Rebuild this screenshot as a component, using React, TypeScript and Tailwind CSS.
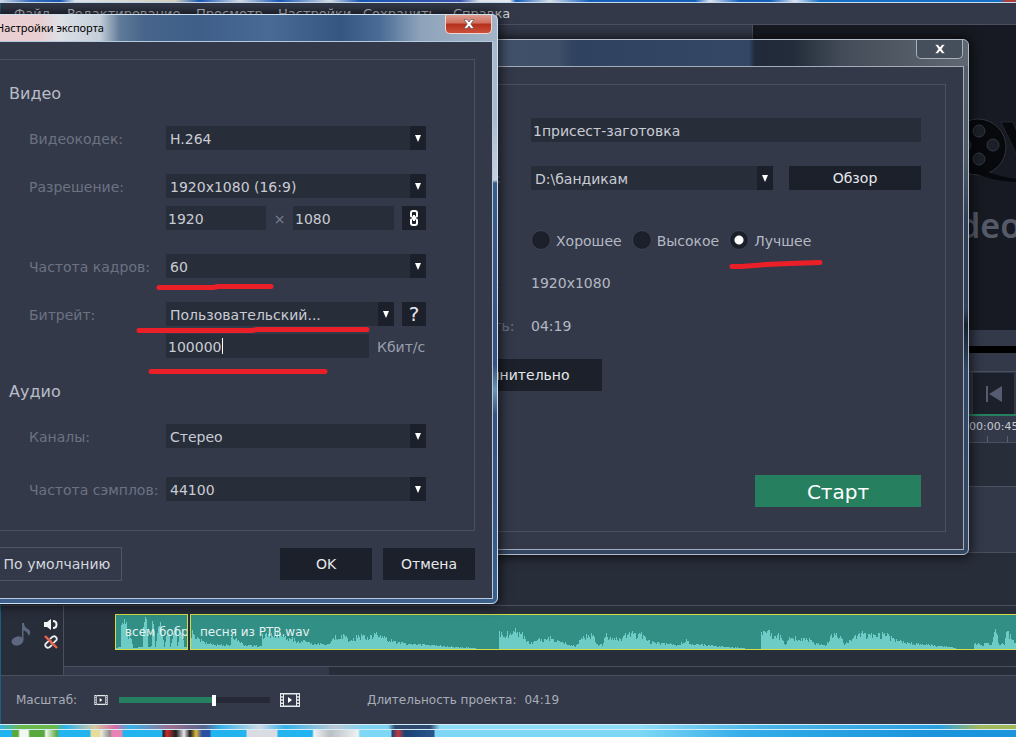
import type { ReactNode } from "react";
import clsx from "clsx";

type Point = [x: number, height: number];

const MENU_ITEMS = [
  { label: "Файл", className: "w-[53px]" },
  { label: "Редактирование", className: "w-[129px]" },
  { label: "Просмотр", className: "w-[82px]" },
  { label: "Настройки", className: "w-[85px]" },
  { label: "Сохранить", className: "w-[90px]" },
  { label: "Справка", className: "w-[60px]" },
];

const INTRO_WAVE: Point[] = [
  [0, 1], [4, 2], [5, 26], [7, 24], [8, 30], [10, 26], [11, 14], [12, 10], [13, 16], [15, 9],
  [17, 1], [26, 2], [27, 22], [29, 34], [30, 28], [31, 16], [32, 2], [35, 3], [36, 28], [38, 20],
  [39, 2], [42, 24], [44, 28], [46, 14], [48, 2], [50, 12], [53, 18], [54, 2], [57, 16], [60, 20],
  [61, 3], [64, 18], [67, 10], [68, 2], [72, 1],
];

const SONG_WAVE: Point[] = [
  [0, 17], [4, 12], [10, 9], [16, 5], [39, 4], [40, 16], [46, 8], [54, 4], [70, 3], [71, 15],
  [84, 17], [98, 11], [118, 6], [138, 5], [142, 12], [154, 15], [158, 7], [167, 14], [181, 12],
  [187, 16], [198, 9], [218, 5], [238, 4], [262, 2], [284, 1], [285, 0], [307, 0], [308, 18],
  [318, 15], [325, 21], [333, 12], [341, 6], [354, 12], [369, 8], [384, 3], [393, 14], [402, 14],
  [406, 5], [411, 4], [415, 14], [424, 10], [436, 16], [450, 15], [459, 7], [488, 4], [494, 9],
  [500, 5], [524, 3], [540, 2], [553, 1], [554, 0], [569, 0], [570, 16], [587, 15], [594, 5],
  [598, 12], [614, 11], [624, 6], [634, 4], [640, 13], [650, 14], [653, 4], [659, 11], [669, 16],
  [680, 14], [695, 15], [704, 9], [719, 6], [739, 4], [759, 2], [770, 0], [782, 0], [783, 6],
  [792, 4], [795, 9], [800, 4], [804, 18], [808, 6], [813, 4], [815, 22], [820, 10], [826, 7],
];

function wavePath(points: Point[], jitter: number) {
  let d = "M0 34";
  for (let i = 0; i < points.length - 1; i++) {
    const [x0, h0] = points[i];
    const [x1, h1] = points[i + 1];
    for (let x = x0; x < x1; x++) {
      const base = h0 + ((h1 - h0) * (x - x0)) / (x1 - x0);
      const noise = Math.abs(Math.sin(x * 12.9898) * 43.7) % 1;
      const h = base < 1 ? 0 : Math.round(base * (1 - jitter + noise * jitter * 1.6));
      d += `V${34 - h}H${x + 1}`;
    }
  }
  return `${d}V34Z`;
}

function AudioClip({
  name,
  points,
  jitter,
  className,
}: {
  name: string;
  points: Point[];
  jitter: number;
  className: string;
}) {
  return (
    <div
      className={clsx(
        "relative flex h-9 items-center overflow-hidden border border-[#d5dc45] bg-[#318f85] pl-[9px]",
        className,
      )}
    >
      <svg className="absolute bottom-0 left-0 h-[34px] w-[826px]" viewBox="0 0 826 34" aria-hidden>
        <path d={wavePath(points, jitter)} fill="#6dccc5" />
      </svg>
      <span className="relative whitespace-nowrap text-[12px] text-[#e4f1f0]">{name}</span>
    </div>
  );
}

function DialogWindow({
  title,
  active,
  className,
  children,
}: {
  title: string;
  active?: boolean;
  className: string;
  children: ReactNode;
}) {
  return (
    <section
      aria-label={title}
      className={clsx(
        "absolute rounded-md border px-1 pb-1 shadow-[0_0_12px_2px_rgba(0,0,0,0.7)]",
        active
          ? "border-[#cfe0ee] bg-[linear-gradient(180deg,#a9b9cd_0px,#a9b9cd_100px,#c6d0df_165px,#3b5b88_168px,#35537c_350px,#6f91b8_375px,#35537c_400px,#3d5f8c_100%)]"
          : "border-[#b3bcc7] bg-[linear-gradient(180deg,#56606d_0px,#4e5a68_120px,#2f4057_180px,#2f4057_270px,#16222f_285px,#2f4766_330px,#334763_100%)]",
        className,
      )}
    >
      <header
        className={clsx(
          "-mx-1 flex h-[26px] items-start justify-between rounded-t-md pr-[5px]",
          active
            ? "bg-[linear-gradient(90deg,#e9cfd2_0px,#e9cfd2_70px,#dde1e7_90px,#c4cdd8_130px,#5f7a98_150px,#47658b_175px,#3f5f89_230px,#486a94_300px,#355680_370px,#4b6c96_410px,#8ea3ba_450px,#a3b4c7_100%)]"
            : "bg-[linear-gradient(90deg,#44546a_0px,#3f4f67_195px,#2f4360_210px,#344765_386px,#202a3a_392px,#232c3a_430px,#434c58_480px,#565e69_560px,#5f6872_100%)]",
        )}
      >
        <h2
          className={clsx(
            "self-center whitespace-nowrap pl-[26px] font-['Noto_Sans',sans-serif] text-[11px]",
            active ? "text-black" : "text-gray-300",
          )}
        >
          {title}
        </h2>
        <button
          type="button"
          aria-label="Закрыть"
          className={clsx(
            "flex h-[19px] w-[47px] items-center justify-center rounded-b-[5px] border border-t-0",
            active
              ? "border-[#f0d6d2] bg-[linear-gradient(180deg,#dd9c90_0%,#cf6f5f_45%,#b5301c_50%,#cc5039_100%)]"
              : "border-[#a9b1ba] bg-[#454e5b]",
          )}
        >
          <svg className="h-[10px] w-[12px]" viewBox="0 0 12 10" aria-hidden>
            <path
              d="M1 .5H4L6 3 8 .5H11L7.8 5 11 9.5H8L6 7 4 9.5H1L4.2 5Z"
              fill="#fff"
              stroke="#4b4b55"
              strokeWidth=".6"
            />
          </svg>
        </button>
      </header>
      <div
        className={clsx(
          "border bg-[#333949] p-[17px]",
          active ? "border-[#b4cbdf]" : "border-[#a4adb9]",
        )}
      >
        {children}
      </div>
    </section>
  );
}

function Combo({ id, value, className }: { id: string; value: string; className?: string }) {
  return (
    <div className={clsx("relative h-6", className)}>
      <select
        id={id}
        defaultValue={value}
        className="size-full appearance-none bg-[#282d3a] pl-1 pr-5 pt-[2px] text-[14px] text-[#c9ccd4] outline-none"
      >
        <option>{value}</option>
      </select>
      <span
        className="pointer-events-none absolute inset-y-0 right-0 flex w-4 items-center justify-center bg-[#1c202b]"
        aria-hidden
      >
        <svg className="h-[7px] w-[6px]" viewBox="0 0 6 7">
          <path d="M0 0H6L3 7Z" fill="#fff" />
        </svg>
      </span>
    </div>
  );
}

function TextField({
  label,
  id,
  value,
  className,
}: {
  label?: string;
  id?: string;
  value: string;
  className: string;
}) {
  return (
    <input
      id={id}
      aria-label={label}
      defaultValue={value}
      className={clsx(
        "h-6 min-w-0 bg-[#282d3a] px-[2px] pt-[2px] text-[14px] text-[#c9ccd4] outline-none",
        className,
      )}
    />
  );
}

function SettingRow({
  label,
  htmlFor,
  className,
  children,
}: {
  label: string;
  htmlFor?: string;
  className?: string;
  children: ReactNode;
}) {
  return (
    <div className={clsx("flex h-6 items-center", className)}>
      <label htmlFor={htmlFor} className="w-[137px] shrink-0 whitespace-nowrap pt-[2px] text-[#6c7282]">
        {label}
      </label>
      {children}
    </div>
  );
}

function DialogButton({ children, className }: { children: ReactNode; className: string }) {
  return (
    <button
      type="button"
      className={clsx("whitespace-nowrap bg-[#1c202b] text-[#e6e8ec]", className)}
    >
      {children}
    </button>
  );
}

function ExportSettingsDialog() {
  return (
    <DialogWindow title="Настройки экспорта" active className="-left-[31px] top-[14px] w-[529px]">
      <div className="border border-[#4a5060] pb-[29px] pl-9 pr-12 pt-6">
        <h3 className="-ml-5 pt-[2px] text-[16px] leading-4 text-[#b9bdc8]">Видео</h3>
        <SettingRow label="Видеокодек:" htmlFor="codec" className="mt-6">
          <Combo id="codec" value="H.264" className="flex-1" />
        </SettingRow>
        <SettingRow label="Разрешение:" htmlFor="resolution" className="mt-6">
          <Combo id="resolution" value="1920x1080 (16:9)" className="flex-1" />
        </SettingRow>
        <div className="ml-[137px] mt-2 flex items-center">
          <TextField label="Ширина" value="1920" className="w-[100px]" />
          <span className="w-[27px] pt-[2px] text-center text-[#7a8090]">×</span>
          <TextField label="Высота" value="1080" className="w-[101px]" />
          <DialogButton className="ml-2 flex size-6 items-center justify-center">
            <svg className="h-4 w-2" viewBox="0 0 8 16" fill="none" stroke="#fff" strokeWidth="2" role="img" aria-label="Сохранять пропорции">
              <rect x="1" y="1" width="6" height="6.500" rx="2" />
              <rect x="1" y="8.500" width="6" height="6.500" rx="2" />
              <path d="M4 5V11" />
              <path d="M0 8H2M6 8H8" stroke="#1c202b" strokeWidth="1.2" />
            </svg>
          </DialogButton>
        </div>
        <SettingRow label="Частота кадров:" htmlFor="fps" className="mt-6">
          <Combo id="fps" value="60" className="flex-1" />
        </SettingRow>
        <SettingRow label="Битрейт:" htmlFor="bitrate" className="mt-6">
          <Combo id="bitrate" value="Пользовательский..." className="flex-1" />
          <DialogButton className="ml-2 size-6 text-[20px] leading-6">?</DialogButton>
        </SettingRow>
        <div className="ml-[137px] mt-2 flex items-center">
          <div className="relative flex w-[203px]">
            <TextField label="Битрейт, Кбит/с" value="100000" className="flex-1" />
            <span className="absolute left-14 top-1 h-4 w-px bg-white" aria-hidden />
          </div>
          <span className="ml-2 whitespace-nowrap pt-[2px] text-[#9a9fac]">Кбит/с</span>
        </div>
        <h3 className="-ml-5 mt-6 pt-[2px] text-[16px] leading-4 text-[#b9bdc8]">Аудио</h3>
        <SettingRow label="Каналы:" htmlFor="channels" className="mt-6">
          <Combo id="channels" value="Стерео" className="flex-1" />
        </SettingRow>
        <SettingRow label="Частота сэмплов:" htmlFor="samples" className="mt-[29px]">
          <Combo id="samples" value="44100" className="flex-1" />
        </SettingRow>
      </div>
      <div className="mt-4 flex items-center">
        <button
          type="button"
          className="h-[34px] w-[130px] whitespace-nowrap border border-[#4f5565] pt-px text-[#d4d7de]"
        >
          По умолчанию
        </button>
        <DialogButton className="ml-auto h-8 w-[92px] pt-px">OK</DialogButton>
        <DialogButton className="ml-[11px] h-8 w-[92px] pt-px">Отмена</DialogButton>
      </div>
    </DialogWindow>
  );
}

function QualityOption({ label, checked }: { label: string; checked?: boolean }) {
  return (
    <label className="flex items-center gap-[5px] whitespace-nowrap text-[#b4b8c2]">
      <input
        type="radio"
        name="quality"
        defaultChecked={checked}
        className="size-5 appearance-none rounded-full border border-[#3f4555] bg-[#1c202b] checked:bg-[radial-gradient(circle,#fff_4px,#1c202b_5px)]"
      />
      <span className="pt-[2px]">{label}</span>
    </label>
  );
}

const EXPORT_LABEL = "w-[126px] shrink-0 whitespace-nowrap text-[#6c7282]";

function ExportDialog() {
  return (
    <DialogWindow title="Экспорт" className="left-[362px] top-[39px] w-[607px]">
      <div className="flex flex-col border border-[#4a5060] pb-6 pl-[19px] pr-6 pt-[33px]">
        <div className="flex h-6 items-center">
          <label htmlFor="file-name" className={EXPORT_LABEL}>Имя файла:</label>
          <TextField id="file-name" value="1присест-заготовка" className="flex-1" />
        </div>
        <div className="mt-6 flex h-6 items-center">
          <label htmlFor="folder" className={EXPORT_LABEL}>Сохранить в:</label>
          <Combo id="folder" value="D:\бандикам" className="flex-1" />
          <DialogButton className="ml-4 h-6 w-[132px] pt-px">Обзор</DialogButton>
        </div>
        <div className="mt-[38px] flex h-6 items-center">
          <span className={EXPORT_LABEL}>Качество:</span>
          <div className="flex gap-[10px]">
            <QualityOption label="Хорошее" />
            <QualityOption label="Высокое" />
            <QualityOption label="Лучшее" checked />
          </div>
        </div>
        <div className="mt-[19px] flex h-6 items-center">
          <span className={EXPORT_LABEL}>Разрешение:</span>
          <span className="text-[#b4b8c2]">1920x1080</span>
        </div>
        <div className="mt-[19px] flex h-6 items-center">
          <span className={EXPORT_LABEL}>Длительность:</span>
          <span className="text-[#b4b8c2]">04:19</span>
        </div>
        <DialogButton className="ml-4 mt-[21px] h-8 w-[181px] pt-px">Дополнительно</DialogButton>
        <button
          type="button"
          className="mt-[84px] h-8 w-[166px] self-end bg-[#26805f] pt-[2px] text-[20px] leading-none text-white"
        >
          Старт
        </button>
      </div>
    </DialogWindow>
  );
}

function PreviewLogo() {
  return (
    <div className="mt-[90px] overflow-hidden pl-[173px]">
      <svg className="h-[70px] w-[91px]" viewBox="925 115 91 70" aria-hidden>
        <circle cx="977" cy="147" r="28" fill="#07090d" stroke="#30343d" />
        <g fill="#1b1f27" stroke="#343842">
          <circle cx="978" cy="131" r="6" />
          <circle cx="992" cy="145" r="6" />
          <circle cx="978" cy="159" r="6" />
          <circle cx="964" cy="145" r="6" />
        </g>
        <path d="M967 163Q990 176 1016 179V182Q984 181 960 166Z" fill="#07090d" />
        <path d="M1000 122H1012L1024 152V172Z" fill="#07090d" stroke="#30343d" strokeWidth=".6" />
      </svg>
      <p className="mt-[22px] whitespace-nowrap pl-[2px] font-['Noto_Sans',sans-serif] text-[34px] font-semibold leading-9 text-[#555a68]">
        Video Editor
      </p>
    </div>
  );
}

function FilmIcon({ className }: { className: string }) {
  return (
    <svg className={className} viewBox="0 0 20 14" fill="none" stroke="#e9ebee" aria-hidden>
      <path d="M.5 0V14M19.5 0V14M3.500 0V14M16.500 0V14" />
      <path d="M2 0V14M18 0V14" strokeWidth="2" strokeDasharray="1.500 1.625" />
      <path d="M4 .75H16M4 13.250H16" strokeWidth="1.500" />
      <path d="M8 4V10L12 7Z" fill="#fff" stroke="none" />
    </svg>
  );
}

function Timeline() {
  return (
    <div className="flex h-[70px] border-t border-[#4a5060] bg-[#282d3a]">
      <div className="flex w-[63px] shrink-0 items-start border-r border-[#4a5060] pl-[10px] pt-[13px]">
        <svg className="mt-[3px] h-[24px] w-[20px]" viewBox="0 0 20 24" aria-hidden>
          <ellipse cx="6.5" cy="19" rx="6" ry="4.5" fill="#5d6780" transform="rotate(-15 6.5 19)" />
          <path d="M11 18V1H13Q13 5 17 7T18 14Q16 9 12.500 8.500V18Z" fill="#5d6780" />
        </svg>
        <div className="ml-[13px] flex flex-col gap-[5px]">
          <svg className="h-[11px] w-[14px]" viewBox="0 0 14 11" fill="none" stroke="#f2f3f5" aria-hidden>
            <path d="M0 3H3L7 0V11L3 8H0Z" fill="#f2f3f5" stroke="none" />
            <path d="M9 2Q12.500 2 12.500 5.500T9 9" strokeWidth="2" />
          </svg>
          <svg className="h-[14px] w-[14px]" viewBox="0 0 14 14" fill="none" strokeWidth="1.8" aria-hidden>
            <path
              d="M6 4 8.500 1.800Q11 .5 12.300 2.500T11.500 6L9.500 7.800Q8 8.500 7 7.500M8 10 5.500 12.200Q3 13.500 1.700 11.500T2.500 8L4.500 6.200Q6 5.500 7 6.500"
              stroke="#e9ebee"
            />
            <path d="M1 1 13 13" stroke="#f0634a" strokeWidth="2.4" />
          </svg>
        </div>
      </div>
      <div className="flex min-w-0 flex-1 flex-col justify-between">
        <div className="flex gap-[2px] pl-[51px] pt-2">
          <AudioClip name="всем бобра" points={INTRO_WAVE} jitter={0.15} className="w-[73px] shrink-0" />
          <AudioClip name="песня из РТВ.wav" points={SONG_WAVE} jitter={0.35} className="flex-1 border-r-0" />
        </div>
        <div className="h-[9px] border-t border-[#4a5060]">
          <div className="h-full w-[265px] bg-[#333949]" />
        </div>
      </div>
    </div>
  );
}

function EditorWindow() {
  return (
    <main className="flex flex-1 flex-col border-l border-l-[#1d5f80]">
      <nav className="flex h-[22px] items-center border-b border-[#4a5060] bg-[#333949] pl-[13px] pt-px text-[13px] text-[#d0d3da]">
        {MENU_ITEMS.map((item) => (
          <button key={item.label} type="button" className={clsx("shrink-0 whitespace-nowrap text-left", item.className)}>
            {item.label}
          </button>
        ))}
      </nav>
      <div className="flex flex-1 justify-end bg-[#333949]">
        <div className="w-[264px] overflow-hidden border-l border-[#4a5060] bg-[#171a22]">
          <PreviewLogo />
        </div>
      </div>
      <div className="h-4 bg-[#333949]" />
      <div className="h-[7px] bg-black" />
      <div className="h-[18px] bg-[#333949]" />
      <div className="flex h-[45px] justify-end border-b-2 border-t border-b-[#26805f] border-t-[#4a5060] bg-[#333949] pr-[2px] pt-px">
        <button
          type="button"
          aria-label="В начало"
          className="flex h-[41px] w-[41px] items-center justify-center bg-[#1c202b]"
        >
          <svg className="h-4 w-4" viewBox="0 0 16 16" fill="#555b70" aria-hidden>
            <path d="M0 0H2V16H0ZM16 0V16L3 8Z" />
          </svg>
        </button>
      </div>
      <div className="flex h-[27px] justify-end overflow-hidden border-b border-[#4a5060] bg-[#333949]">
        <div className="w-[47px] overflow-hidden">
          <time className="block whitespace-nowrap pt-[5px] text-[11px] leading-3 text-[#c6c9d1]">00:00:45</time>
          <div className="ml-[18px] mt-[3px] flex h-[6px] border-l border-[#5a6070] pl-[19px]">
            <span className="border-r border-[#5a6070]" />
          </div>
        </div>
      </div>
      <div className="h-11 border-b border-[#4a5060] bg-[#282d3a]" />
      <div className="h-[66px] border-b border-[#4a5060] bg-[#333949]" />
      <div className="h-[52px] bg-[#282d3a]" />
      <Timeline />
      <footer className="flex h-[49px] items-center border-t border-[#4a5060] bg-[#333949] pl-[15px] text-[12px] text-[#a9adb8]">
        <label htmlFor="zoom" className="w-[78px]">Масштаб:</label>
        <FilmIcon className="h-[10px] w-[14px]" />
        <input
          id="zoom"
          type="range"
          min={0}
          max={100}
          defaultValue={63}
          className="ml-[11px] h-[11px] w-[151px] appearance-none bg-[linear-gradient(90deg,#26805f_62%,#252a36_62%)] bg-[length:100%_6px] bg-center bg-no-repeat [&::-webkit-slider-thumb]:h-[11px] [&::-webkit-slider-thumb]:w-1 [&::-webkit-slider-thumb]:appearance-none [&::-webkit-slider-thumb]:bg-white"
        />
        <FilmIcon className="ml-[10px] h-[14px] w-[20px]" />
        <span className="ml-[67px]">Длительность проекта:</span>
        <span className="ml-2">04:19</span>
      </footer>
    </main>
  );
}

// Hand-drawn underlines on top of the windows.
function Highlights() {
  return (
    <svg
      className="pointer-events-none absolute left-0 top-0 h-[400px] w-[840px]"
      viewBox="0 0 840 400"
      fill="none"
      stroke="#ea1f28"
      strokeWidth="5"
      strokeLinecap="round"
      aria-hidden
    >
      <path d="M159 287.500H213L218 286.500H271" />
      <path d="M139 330.500H252L257 329.500H367" />
      <path d="M151 371.500H325" />
      <path d="M732 266.500H741L766 264.500 790 263.500 820 262.500" />
    </svg>
  );
}

export default function App() {
  return (
    <div className="relative flex min-h-screen flex-col overflow-hidden font-['DejaVu_Sans',Verdana,sans-serif] text-[14px]">
      <div className="h-[3px] border-b border-[#c5dcf0] bg-[linear-gradient(90deg,#d5deea_0px,#3a6fc0_30px,#1a58b4_60px,#dfe6ef_75px,#d8d3c0_175px,#1958b8_200px,#d9dfe8_240px,#1958b8_280px,#d9dfe8_330px,#1958b8_360px,#3a56b0_460px,#e4e8ed_480px,#e4e8ed_510px,#1460bb_516px,#d9dfe8_550px,#1460bb_590px,#1460bb_695px,#dfe6ef_710px,#1460bb_740px,#1460bb_770px,#dfe6ef_795px,#1670c4_820px,#1670c4_1000px,#b04038_1006px)]" />
      <EditorWindow />
      <div className="h-[6px] border-y border-y-[#d6eefb] bg-[linear-gradient(90deg,#35b2e8_0px,#6bb84c_20px,#6bb84c_55px,#2ab3ec_65px,#d9c7a0_95px,#d86ba6_115px,#35b2e8_130px,#9d6f8e_170px,#56658e_205px,#35b2e8_220px,#cfd9e4_260px,#35b2e8_285px,#bcc8d2_335px,#7ed3f2_365px,#7ed3f2_388px,#30496e_395px,#30496e_430px,#8edcf5_440px,#8edcf5_640px,#4ab6e8_760px,#2c9fe0_940px,#a3b85a_980px,#a3b85a_100%)]" />
      <div className="h-[7px] bg-[linear-gradient(90deg,#22b4ee_0px,#22b4ee_12px,#58a93e_12px,#58a93e_18px,#f2f6f0_20px,#f2f6f0_28px,#58a93e_30px,#58a93e_44px,#f2f6f0_46px,#58a93e_57px,#22b4ee_59px,#22b4ee_90px,#e8dc9a_91px,#e8dc9a_100px,#eceae6_101px,#8d8a88_110px,#e884b4_112px,#e884b4_122px,#22b4ee_123px,#22b4ee_162px,#1d1d22_163px,#c92f2c_167px,#1d1d22_176px,#e8e8e8_184px,#1d1d22_190px,#e0b83a_196px,#2c4fa4_202px,#2c4fa4_210px,#22b4ee_211px,#22b4ee_246px,#d9dde1_247px,#d9dde1_277px,#22b4ee_278px,#22b4ee_312px,#eff1f2_314px,#b9bfc4_330px,#eff1f2_358px,#7ed8f5_360px,#7ed8f5_391px,#1c4274_392px,#c23a3a_398px,#1c4274_405px,#2a568c_434px,#7ed8f5_435px,#7ed8f5_640px,#35aee9_740px,#1b94dc_930px,#1b94dc_100%)]" />
      <ExportDialog />
      <ExportSettingsDialog />
      <Highlights />
    </div>
  );
}
